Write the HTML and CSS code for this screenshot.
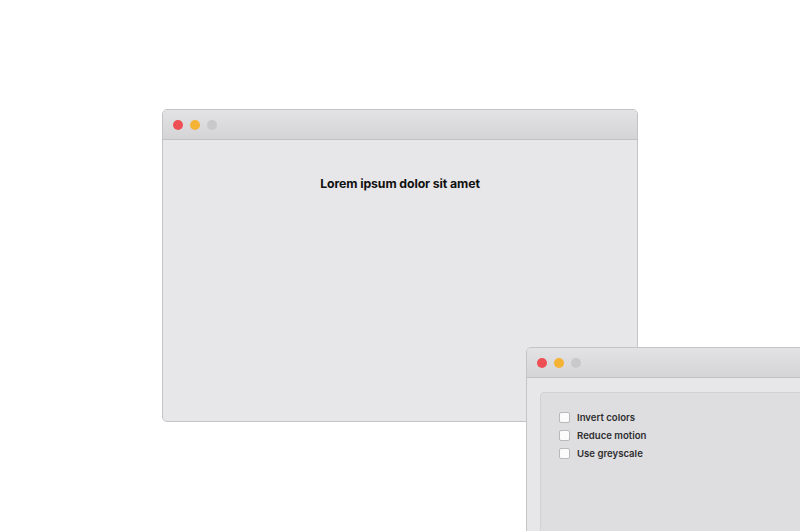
FILE: index.html
```html
<!DOCTYPE html>
<html>
<head>
<meta charset="utf-8">
<link rel="stylesheet" href="styles.css">
</head>
<body>
<div class="desktop">
  <div class="window win-main">
    <div class="titlebar">
      <span class="dot red"></span><span class="dot yellow"></span><span class="dot grey"></span>
    </div>
    <div class="body main-body">
      <h1 class="title">Lorem ipsum dolor sit amet</h1>
    </div>
  </div>
  <div class="window win-settings">
    <div class="titlebar">
      <span class="dot red"></span><span class="dot yellow"></span><span class="dot grey"></span>
    </div>
    <div class="body settings-body">
      <div class="panel">
        <label class="opt"><span class="box"></span>Invert colors</label>
        <label class="opt"><span class="box"></span>Reduce motion</label>
        <label class="opt"><span class="box"></span>Use greyscale</label>
      </div>
    </div>
  </div>
</div>
</body>
</html>
```
FILE: styles.css
```css
html, body {
  margin: 0;
  padding: 0;
  background: #ffffff;
  font-family: Inter, "Liberation Sans", sans-serif;
}
.desktop {
  position: relative;
  width: 800px;
  height: 531px;
  overflow: hidden;
}
.window {
  position: absolute;
  background: #e7e6e8;
  border: 1px solid #c4c3c5;
  border-radius: 5px;
  box-sizing: border-box;
  display: flex;
  flex-direction: column;
  overflow: hidden;
}
.win-main {
  left: 162px;
  top: 109px;
  width: 476px;
  height: 313px;
}
.win-settings {
  left: 526px;
  top: 347px;
  width: 300px;
  height: 220px;
}
.titlebar {
  height: 29px;
  flex: none;
  background: linear-gradient(#e3e2e4, #d4d3d5);
  border-bottom: 1px solid #c2c1c3;
  display: flex;
  align-items: center;
  gap: 7px;
  padding-left: 10px;
}
.dot {
  width: 10px;
  height: 10px;
  border-radius: 50%;
}
.red { background: #ee4f55; }
.yellow { background: #f5b335; }
.grey { background: #c9c8ca; }
.main-body {
  flex: 1;
  display: flex;
  justify-content: center;
}
.title {
  margin: 36px 0 0;
  font-size: 12.3px;
  font-weight: 700;
  color: #111111;
  letter-spacing: -0.1px;
}
.settings-body {
  flex: 1;
  padding: 14px 0 0 13px;
}
.panel {
  background: #dedddf;
  border: 1px solid #d2d1d3;
  border-radius: 4px;
  height: 200px;
  padding: 18px 0 0 18px;
  display: flex;
  flex-direction: column;
  gap: 5px;
}
.opt {
  display: flex;
  align-items: center;
  gap: 7px;
  font-size: 9.6px;
  font-weight: 600;
  color: #2e2e30;
  height: 13px;
}
.box {
  width: 9px;
  height: 9px;
  background: #fbfbfb;
  border: 1px solid #b9b8ba;
  border-radius: 2px;
}
```
